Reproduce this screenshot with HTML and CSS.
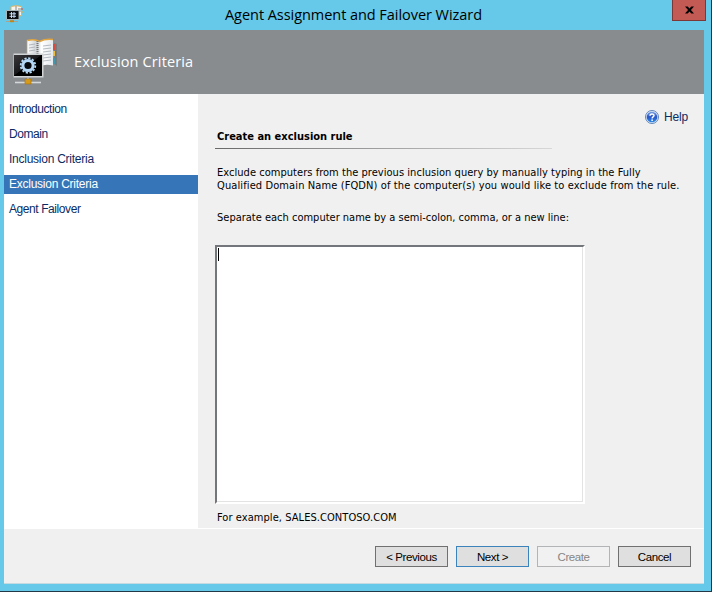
FILE: index.html
```html
<!DOCTYPE html>
<html lang="en">
<head>
<meta charset="utf-8">
<title>Agent Assignment and Failover Wizard</title>
<link rel="stylesheet" href="styles.css">
</head>
<body>
<div class="window">
  <div class="titlebar">
    <svg class="app-icon" width="18" height="18" viewBox="0 0 18 18">
      <path d="M5 1.500l5-.8 5.500.8v9l-5.500 1-5-1z" fill="#f5f3ec" stroke="#e4b25c"/>
      <path d="M10 1v9M12 4h3M12 6h3" stroke="#888" fill="none"/>
      <path d="M16 3v2" stroke="#cf4b35"/><path d="M16 6v2" stroke="#e6ae31"/>
      <path d="M.5 5.500h12.500v9H.5z" fill="#0c0d10" stroke="#a9b6bb"/>
      <path d="M5.500 7v6M8 7v6M3.500 8.800h6.500M3.500 11.300h6.500" stroke="#c5dcf5"/>
      <path d="M0 16.500h12" stroke="#a8a38e"/><path d="M4 15.200h4v2H4z" fill="#c28518"/>
    </svg>
    <h1 class="title">Agent Assignment and Failover Wizard</h1>
    <button class="close" aria-label="Close"><svg width="9" height="8" viewBox="0 0 10 8"><path d="M0 0h3l2 2.300L7 0h3L6.600 4 10 8H7L5 5.700 3 8H0l3.400-4z"/></svg></button>
  </div>
  <main class="client">
    <header class="banner">
      <svg class="banner-icon" width="46" height="48" viewBox="0 0 46 48">
        <defs>
          <linearGradient id="page" x2="1"><stop stop-color="#fff"/><stop offset=".4" stop-color="#c9cdd0"/><stop offset=".55" stop-color="#fff"/><stop offset="1" stop-color="#e5eaee"/></linearGradient>
          <linearGradient id="screen" x2="1" y2="1"><stop stop-color="#3a3a3c"/><stop offset=".48" stop-color="#19191b"/><stop offset=".5" stop-color="#000"/></linearGradient>
        </defs>
        <path d="M41 5l3 1v22l-3-2z" fill="#747a7d"/>
        <path d="M39 6h3v6h-3z" fill="#d84d40"/><path d="M39 13h3v5h-3z" fill="#efbc3c"/><path d="M39 20h3v6h-3z" fill="#4597ad"/>
        <path d="M14 2.500q8-2 12.500 1 6-3 13.500-2v26q-8-2-13.500 1-6-2-12.500-1z" fill="url(#page)"/>
        <path d="M14 2.500q8-2 12.500 1 6-3 13.500-2" fill="none" stroke="#e2a43e" stroke-width="1.400"/>
        <path d="M14.300 2v14" stroke="#e2c48e" stroke-width=".8"/>
        <path d="M24.500 3v25" stroke="#777" stroke-width="2" stroke-dasharray="1 1"/>
        <path d="M30 8l8-1M30 11l8-1M30 14l8-1M30 17l8-1M30 20l8-1M30 23l8-1M16 7l6-1M16 10l6-1M16 13l6-1" stroke="#a4abb1" stroke-width=".8"/>
        <path d="M.5 15.500h30v24H.5z" fill="#d1d4d5"/>
        <path d="M1 17h28v21H1z" fill="url(#screen)"/>
        <circle cx="15" cy="27.500" r="7.300" fill="none" stroke="#b9dcf7" stroke-width="1.800" stroke-dasharray="2.200 1.622"/>
        <circle cx="15" cy="27.500" r="5.100" fill="#080a0d" stroke="#b4d7f5" stroke-width="3"/>
        <path d="M2 44.500h26" stroke="#d5d8d8" stroke-width="1.600"/><path d="M15 39v3" stroke="#b5b8b8" stroke-width="2"/>
        <path d="M12 41h6v5h-6z" fill="#d69a1c" stroke="#a87007" stroke-width=".6"/>
      </svg>
      <h2>Exclusion Criteria</h2>
    </header>
    <div class="body">
      <nav class="steps">
        <a class="tight">Introduction</a>
        <a class="tight">Domain</a>
        <a>Inclusion Criteria</a>
        <a class="active">Exclusion Criteria</a>
        <a class="tight">Agent Failover</a>
      </nav>
      <section class="page">
        <div class="help">
          <svg width="14" height="14" viewBox="0 0 14 14">
            <defs><linearGradient id="ball" y2="1" x2="0"><stop stop-color="#789fe0"/><stop offset=".5" stop-color="#2856c8"/><stop offset="1" stop-color="#2f8be8"/></linearGradient></defs>
            <circle cx="7" cy="7" r="6.500" fill="#dce8fa" stroke="#547bb2" stroke-width=".9"/>
            <circle cx="7" cy="7" r="5.300" fill="url(#ball)"/>
            <path d="M5 5.700C5 3.600 9 3.500 9 5.500 9 6.900 7.100 6.800 7.100 8.400" fill="none" stroke="#fff" stroke-width="1.400"/><circle cx="7.100" cy="10.200" r=".85" fill="#fff"/>
          </svg>
          <a>Help</a>
        </div>
        <h3>Create an exclusion rule</h3>
        <div class="rule"></div>
        <p class="intro"><span class="line-first">Exclude computers from the previous inclusion query by manually typing in the Fully</span><br><span class="line-second">Qualified Domain Name (FQDN) of the computer(s) you would like to exclude from the rule.</span></p>
        <p class="hint">Separate each computer name by a semi-colon, comma, or a new line:</p>
        <div class="textbox"><i class="caret"></i></div>
        <p class="example">For example, SALES.CONTOSO.COM</p>
      </section>
    </div>
    <footer class="actions">
      <button>&lt; Previous</button>
      <button class="default">Next &gt;</button>
      <button disabled>Create</button>
      <button>Cancel</button>
    </footer>
  </main>
</div>
</body>
</html>
```
FILE: styles.css
```css
* { box-sizing: border-box; }
body, h1, h2, h3, p { margin: 0; font-weight: 400; }
svg { display: block; flex: none; }
body { background: #243947; overflow: hidden; }
.window {
  width: 711px; height: 591px;
  padding: 0 7px 7px 4px;
  background: #66c9e9;
  color: #000;
}
.titlebar { display: flex; height: 30px; align-items: flex-start; }
.app-icon { margin: 5px 0 0 2px; }
.title {
  flex: 1;
  padding-left: 201px;
  font: 14.500px/29px "Open Sans", "Noto Sans", sans-serif;
  letter-spacing: -.05px;
  white-space: nowrap;
}
.close {
  display: flex; align-items: center; justify-content: center;
  width: 34px; height: 21px; padding: 0 0 1px;
  margin-right: -2px;
  border: 1px solid #7d3836; border-top: 0;
  background: #c45a54;
}
.client { width: 700px; height: 554px; background: #f0f0f0; border-bottom: 1px solid #c6dbe1; }
.banner {
  display: flex; align-items: flex-start;
  height: 64px; padding: 8px 0 0 9px;
  background: #888c8f;
}
.banner h2 {
  margin-left: 15px;
  font: 14.500px/47px "Open Sans", "Noto Sans", sans-serif;
  letter-spacing: .14px;
  color: #fff;
}
.body { display: flex; height: 435px; border-bottom: 1px solid #fff; }
.steps { width: 194px; padding-top: 6px; background: #fff; }
.steps a {
  display: block;
  height: 19px; margin-bottom: 6px; padding-left: 5px;
  font: 12px/19px "Liberation Sans", sans-serif;
  letter-spacing: -.25px;
  color: #0b2b64;
}
.steps .tight { letter-spacing: -.42px; }
.steps .active { background: #3676b8; color: #fff; }
.page {
  flex: 1; padding: 14px 0 0 17px;
  font: 11px/13px "DejaVu Sans Condensed", "DejaVu Sans", sans-serif;
  font-stretch: condensed;
  white-space: nowrap;
}
.help { display: flex; gap: 5px; align-items: center; height: 18px; padding-left: 430px; }
.help a { font: 12px/16px "Liberation Sans", sans-serif; letter-spacing: -.2px; color: #0b2b64; }
.page h3 { margin: 4px 0 0 2px; font-size: 11px; line-height: 13px; font-weight: 700; }
.rule { width: 337px; height: 1px; margin-top: 5px; background: linear-gradient(90deg, #696969, #d8d8d8); }
.page p { padding-left: 2px; }
.intro { margin-top: 17px; }
.line-first { letter-spacing: .04px; }
.line-second { letter-spacing: .11px; }
.hint { margin-top: 19px; }
.textbox {
  width: 370px; height: 259px; margin-top: 21px; padding: 1px;
  border: 2px solid; border-color: #73767a #fff #fff #73767a;
  background: #fff; box-shadow: inset -1px -1px #e3e3e3;
}
.caret { display: block; width: 1px; height: 13px; background: #000; }
.example { margin-top: 7px; letter-spacing: .06px; }
.actions { display: flex; justify-content: flex-end; gap: 8px; padding: 17px 13px 0 0; }
.actions button {
  width: 73px; height: 21px; padding: 1px 0 0;
  border: 1px solid #707070; background: #dfdfdf;
  font: 11.500px/18px "Liberation Sans", sans-serif; color: #000;
  letter-spacing: -.42px;
}
.actions .default { border-color: #3b83bd; }
.actions button:disabled { border-color: #b2b4b6; background: #f1f1f1; color: #858585; }
```
